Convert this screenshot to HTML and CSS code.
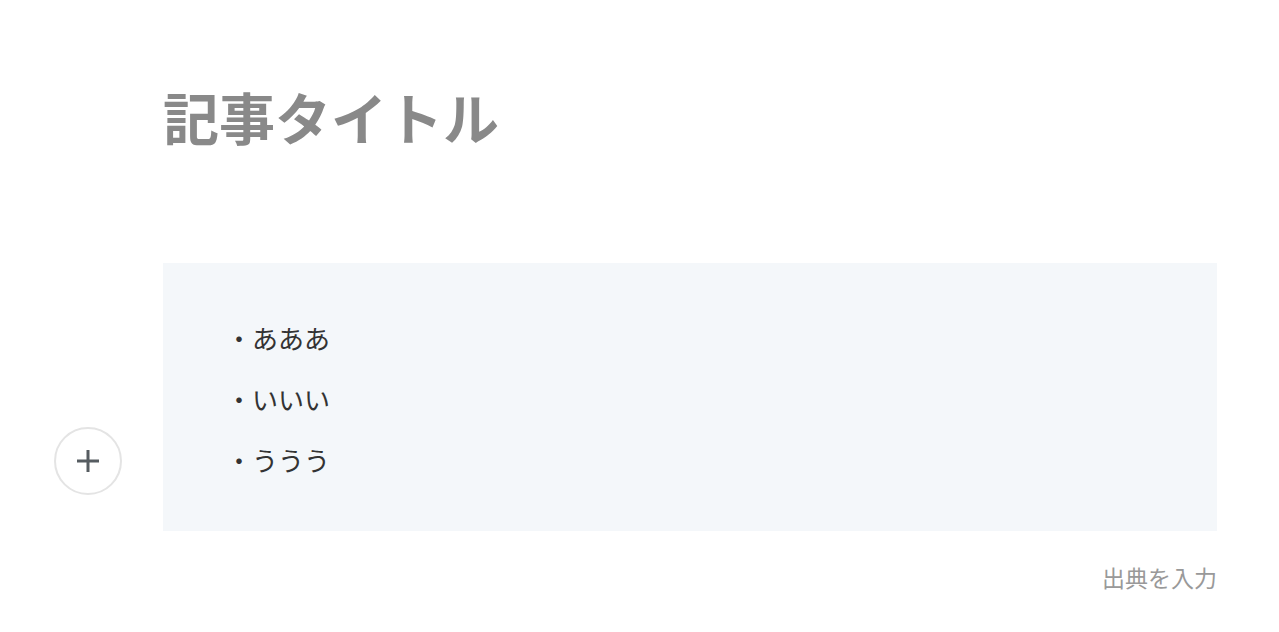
FILE: index.html
```html
<!DOCTYPE html>
<html lang="ja">
<head>
    <meta charset="UTF-8">
    <meta name="viewport" content="width=device-width, initial-scale=1.0">
    <title>記事タイトル</title>
    <link rel="stylesheet" href="styles.css">
</head>
<body>
    <div class="editor">
        <h1 class="title">記事タイトル</h1>

        <div class="block">
            <button class="add-button" aria-label="ブロックを追加">
                <svg width="26" height="26" viewBox="0 0 26 26">
                    <path d="M13 2v22M2 13h22" stroke="#565c61" stroke-width="3" fill="none"/>
                </svg>
            </button>
            <blockquote class="quote">
                <p>・あああ</p>
                <p>・いいい</p>
                <p>・ううう</p>
            </blockquote>
        </div>

        <div class="source">出典を入力</div>
    </div>
</body>
</html>
```

FILE: styles.css
```css
:root {
    --title-color: #898989;
    --text-color: #333333;
    --quote-bg: #f4f7fa;
    --muted-color: #999999;
    --border-color: #e4e4e4;
}

body {
    margin: 0;
    font-family: "Noto Sans CJK JP", "Noto Sans", sans-serif;
    background: #ffffff;
    color: var(--text-color);
}

.editor {
    padding: 74px 62px 0 163px;
}

.title {
    margin: 0;
    font-size: 56px;
    line-height: 84px;
    font-weight: 700;
    color: var(--title-color);
}

.block {
    position: relative;
    margin-top: 105px;
}

.add-button {
    position: absolute;
    left: -109px;
    top: 164px;
    width: 68px;
    height: 68px;
    padding: 0;
    border: 2px solid var(--border-color);
    border-radius: 50%;
    background: #ffffff;
    display: flex;
    align-items: center;
    justify-content: center;
    cursor: pointer;
}

.quote {
    margin: 0;
    height: 268px;
    box-sizing: border-box;
    padding: 44px 0 0 63px;
    background: var(--quote-bg);
}

.quote p {
    margin: 0;
    font-size: 26px;
    line-height: 61px;
}

.source {
    margin-top: 30px;
    text-align: right;
    font-size: 23px;
    line-height: 33px;
    color: var(--muted-color);
}
```
